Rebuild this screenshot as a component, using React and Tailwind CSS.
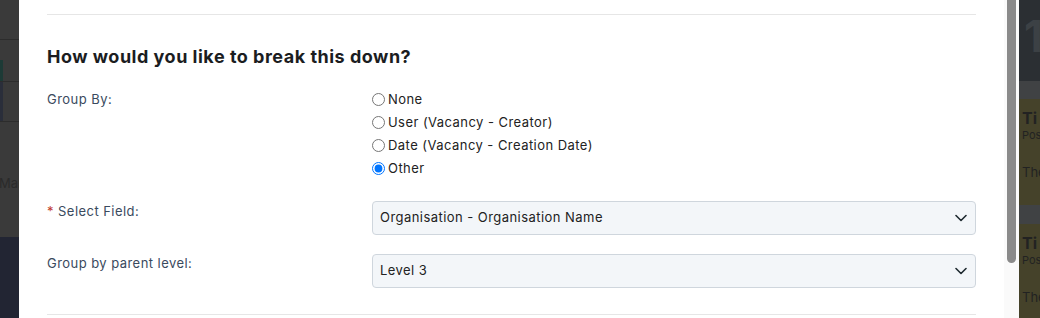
import React from "react";

function Chevron() {
  return (
    <svg width="12" height="8" viewBox="0 0 12 8" fill="none">
      <path d="M1 1.5 L6 6.5 L11 1.5" stroke="#1f2a30" strokeWidth="1.6" strokeLinecap="round" strokeLinejoin="round" />
    </svg>
  );
}

function Select({ value }) {
  return (
    <div className="flex h-[34px] w-full items-center justify-between rounded-[4px] border border-[#cfd6dd] bg-[#f3f6f9] pl-[7px] pr-[8px] text-[13px] tracking-[0.45px] text-[#222]">
      <span>{value}</span>
      <Chevron />
    </div>
  );
}

function Radio({ label, checked }) {
  return (
    <label className="flex h-[23px] items-center gap-[3px] text-[13px] tracking-[0.45px] text-[#222]">
      <input type="radio" name="groupby" defaultChecked={checked} className="m-0 h-[13px] w-[13px]" />
      <span>{label}</span>
    </label>
  );
}

export default function App() {
  return (
    <div
      className="flex h-[318px] w-[1040px] overflow-hidden"
      style={{ fontFamily: "Inter, 'Noto Sans', sans-serif" }}
    >
      {/* left backdrop */}
      <div className="flex w-[19px] shrink-0 flex-col bg-[#3a3a3a]">
        <div className="h-[40px] border-b border-[#2c2c2c]" />
        <div className="flex h-[42px] border-b border-[#2c2c2c]">
          <div className="mt-[20px] w-[3px] bg-[#1d3a36]" />
        </div>
        <div className="flex h-[40px] border-b border-[#2c2c2c]">
          <div className="w-[3px] bg-[#2a2e3a]" />
        </div>
        <div className="flex h-[115px] items-start pt-[52px] text-[13px] text-[#2a2a2a] whitespace-nowrap">
          <span className="-ml-[1px]">Mar</span>
        </div>
        <div className="flex-1 bg-[#222533]" />
      </div>

      {/* modal */}
      <div className="flex w-[985px] shrink-0 flex-col bg-white px-[28px]">
        <div className="mt-[14px] border-t border-[#e6e6e6]" />
        <h2 className="mt-[30px] text-[18px] font-bold leading-[24px] tracking-[0.5px] text-[#1b1d1f]">
          How would you like to break this down?
        </h2>
        <div className="mt-[19px] flex">
          <div className="w-[325px] shrink-0 pt-[2px] text-[13px] tracking-[0.45px] text-[#3a4a5e]">Group By:</div>
          <div className="flex flex-col">
            <Radio label="None" />
            <Radio label="User (Vacancy - Creator)" />
            <Radio label="Date (Vacancy - Creation Date)" />
            <Radio label="Other" checked />
          </div>
        </div>
        <div className="mt-[21px] flex">
          <div className="w-[325px] shrink-0 pt-[1px] text-[13px] tracking-[0.45px] text-[#3a4a5e]">
            <span className="text-[#c0392b]">*</span> Select Field:
          </div>
          <Select value="Organisation - Organisation Name" />
        </div>
        <div className="mt-[19px] flex">
          <div className="w-[325px] shrink-0 pt-[0px] text-[13px] tracking-[0.45px] text-[#3a4a5e]">Group by parent level:</div>
          <Select value="Level 3" />
        </div>
        <div className="mt-[26px] border-t border-[#e6e6e6]" />
      </div>

      {/* scrollbar */}
      <div className="flex w-[15px] shrink-0 justify-center bg-[#fafafa]">
        <div className="h-[263px] w-[9px] rounded-b-full bg-[#8a8a8a]" />
      </div>

      {/* right backdrop */}
      <div className="flex w-[21px] shrink-0 flex-col overflow-hidden">
        <div className="h-[81px] overflow-hidden bg-[#2b2f33] pl-[5px] pt-[12px] text-[44px] font-bold leading-[48px] text-[#3c4145] whitespace-nowrap">
          1
        </div>
        <div className="h-[18px] bg-[#404244]" />
        <div className="h-[106px] overflow-hidden bg-[#45422a] pl-[3px] whitespace-nowrap text-[#222]">
          <div className="pt-[9px] text-[16px] font-bold leading-[20px]">Ti</div>
          <div className="text-[11px] leading-[14px]">Pos</div>
          <div className="pt-[22px] text-[13px] leading-[16px]">The</div>
        </div>
        <div className="h-[19px] bg-[#404244]" />
        <div className="flex-1 overflow-hidden bg-[#45422a] pl-[3px] whitespace-nowrap text-[#222]">
          <div className="pt-[9px] text-[16px] font-bold leading-[20px]">Ti</div>
          <div className="text-[11px] leading-[14px]">Pos</div>
          <div className="pt-[22px] text-[13px] leading-[16px]">The</div>
        </div>
      </div>
    </div>
  );
}
